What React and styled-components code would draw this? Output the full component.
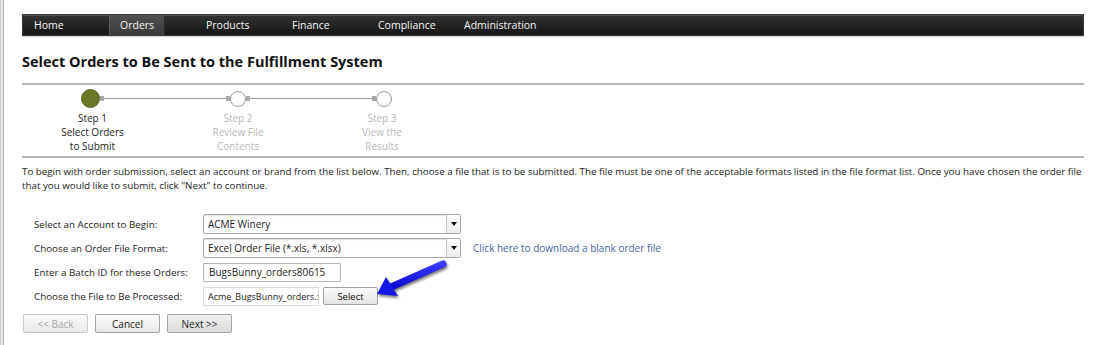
import React from 'react';
import styled, { createGlobalStyle } from 'styled-components';

const GlobalStyle = createGlobalStyle`
  html, body {
    margin: 0;
    padding: 0;
    background: #ffffff;
  }
  body {
    font-family: 'Open Sans', 'Noto Sans', sans-serif;
    color: #222;
  }
`;

const App = () => {
  const navItems = ['Home', 'Orders', 'Products', 'Finance', 'Compliance', 'Administration'];

  const steps = [
    { num: 1, lines: ['Select Orders', 'to Submit'], active: true },
    { num: 2, lines: ['Review File', 'Contents'] },
    { num: 3, lines: ['View the', 'Results'] }
  ];

  return (
    <>
      <GlobalStyle />
      <Page>
        <WindowEdge />
        <Main>
          <NavBar>
            {navItems.map((item) => (
              <NavCell key={item}>
                <NavLabel $active={item === 'Orders'}>{item}</NavLabel>
              </NavCell>
            ))}
          </NavBar>

          <Title>Select Orders to Be Sent to the Fulfillment System</Title>

          <StepsRow>
            {steps.map((step, i) => (
              <Step key={step.num}>
                <Track>
                  <Segment $show={i > 0} />
                  {i > 0 && <Tab />}
                  <Dot $active={step.active} />
                  {i < steps.length - 1 && <Tab />}
                  <Segment $show={i < steps.length - 1} />
                </Track>
                <StepText $active={step.active}>
                  <div>Step {step.num}</div>
                  {step.lines.map((l) => (
                    <div key={l}>{l}</div>
                  ))}
                </StepText>
              </Step>
            ))}
          </StepsRow>

          <Intro>
            To begin with order submission, select an account or brand from the list below. Then, choose a file that is to be submitted. The file must be one of the acceptable formats listed in the file format list. Once you have chosen the order file that you would like to submit, click "Next" to continue.
          </Intro>

          <Form>
            <FormRow>
              <Label>Select an Account to Begin:</Label>
              <Dropdown>
                <DropValue>ACME Winery</DropValue>
                <DropButton><Caret /></DropButton>
              </Dropdown>
            </FormRow>
            <FormRow>
              <Label>Choose an Order File Format:</Label>
              <Dropdown>
                <DropValue>Excel Order File (*.xls, *.xlsx)</DropValue>
                <DropButton><Caret /></DropButton>
              </Dropdown>
              <DownloadLink href="#">Click here to download a blank order file</DownloadLink>
            </FormRow>
            <FormRow>
              <Label>Enter a Batch ID for these Orders:</Label>
              <TextBox>BugsBunny_orders80615</TextBox>
            </FormRow>
            <FormRow>
              <Label>Choose the File to Be Processed:</Label>
              <FileBox>Acme_BugsBunny_orders.xlsx</FileBox>
              <SelectButton>Select</SelectButton>
            </FormRow>

            <Pointer width="84" height="46" viewBox="0 0 84 46">
              <defs>
                <linearGradient id="arrowBlue" x1="0" y1="0" x2="0" y2="1">
                  <stop offset="0" stopColor="#3b3bff" />
                  <stop offset="1" stopColor="#0a0ad0" />
                </linearGradient>
              </defs>
              <line x1="71" y1="9" x2="19" y2="32" stroke="url(#arrowBlue)" strokeWidth="7" strokeLinecap="round" />
              <polygon points="5,39 14,22 26,41" fill="#1616e6" />
            </Pointer>
          </Form>

          <ButtonRow>
            <WizardButton disabled>&lt;&lt; Back</WizardButton>
            <WizardButton>Cancel</WizardButton>
            <WizardButton $hover>Next &gt;&gt;</WizardButton>
          </ButtonRow>
        </Main>
      </Page>
    </>
  );
};

// Styled Components
const Page = styled.div`
  display: flex;
  width: 1100px;
  height: 345px;
  overflow: hidden;
`;

const WindowEdge = styled.div`
  width: 3px;
  flex-shrink: 0;
  background: #e9eaec;
  border-right: 1px solid #a9acb2;
  box-shadow: inset 1px 0 0 #c9ccd1;
`;

const Main = styled.div`
  width: 1062px;
  margin-left: 18px;
  display: flex;
  flex-direction: column;
`;

const NavBar = styled.div`
  margin-top: 14px;
  height: 20px;
  display: grid;
  grid-template-columns: repeat(6, 86px);
  padding-left: 0;
  background: linear-gradient(#333333, #151515);
  border: 1px solid #3c3c3c;
  box-shadow: inset 0 1px 0 #4a4a4a, 0 1px 1px #d8d8d8;
`;

const NavCell = styled.div`
  display: flex;
  align-items: stretch;
`;

const NavLabel = styled.span`
  display: flex;
  align-items: center;
  padding: 0 10px;
  font-size: 10.5px;
  color: #f4f4f4;
  background: ${(p) => (p.$active ? 'linear-gradient(#505050, #3a3a3a)' : 'transparent')};
  border-left: 1px solid ${(p) => (p.$active ? '#5e5e5e' : 'transparent')};
  border-right: 1px solid ${(p) => (p.$active ? '#2a2a2a' : 'transparent')};
`;

const Title = styled.h1`
  margin: 16px 0 0;
  height: 31px;
  font-size: 14.5px;
  font-weight: 700;
  color: #111;
  line-height: 20px;
`;

const StepsRow = styled.div`
  border-top: 2px solid #b4b4b4;
  border-bottom: 2px solid #b4b4b4;
  padding: 4px 0 3px;
  display: grid;
  grid-template-columns: repeat(3, 144px);
  & > :first-child {
    margin-left: -3px;
  }
`;

const Step = styled.div`
  display: flex;
  flex-direction: column;
  align-items: stretch;
`;

const Track = styled.div`
  height: 19px;
  display: flex;
  align-items: center;
`;

const Segment = styled.div`
  flex: 1;
  height: 1px;
  background: ${(p) => (p.$show ? '#9a9a9a' : 'transparent')};
`;

const Tab = styled.div`
  width: 4px;
  height: 5px;
  background: #a8a8a8;
`;

const Dot = styled.div`
  box-sizing: border-box;
  width: ${(p) => (p.$active ? '19px' : '16px')};
  height: ${(p) => (p.$active ? '19px' : '16px')};
  border-radius: 50%;
  background: ${(p) => (p.$active ? '#687828' : '#ffffff')};
  border: 1px solid ${(p) => (p.$active ? '#56631f' : '#9c9c9c')};
`;

const StepText = styled.div`
  margin-top: 3px;
  text-align: center;
  font-size: 10px;
  line-height: 14px;
  color: ${(p) => (p.$active ? '#1e1e1e' : '#b9b9b9')};
`;

const Intro = styled.p`
  margin: 7px 0 0;
  width: 1062px;
  font-size: 9.78px;
  line-height: 14px;
  color: #222;
`;

const Form = styled.div`
  position: relative;
  margin-top: 21px;
  padding-left: 12px;
  display: flex;
  flex-direction: column;
  gap: 4px;
`;

const FormRow = styled.div`
  display: flex;
  align-items: center;
  height: 20px;
`;

const Label = styled.span`
  width: 169px;
  flex-shrink: 0;
  font-size: 9.8px;
  color: #222;
`;

const Dropdown = styled.div`
  box-sizing: border-box;
  width: 258px;
  height: 20px;
  display: flex;
  border: 1px solid #a9a9a9;
  border-radius: 2px;
  background: #fff;
  box-shadow: inset 0 1px 1px #e2e2e2;
`;

const DropValue = styled.span`
  flex: 1;
  display: flex;
  align-items: center;
  padding-left: 4px;
  font-size: 10px;
  color: #222;
`;

const DropButton = styled.span`
  width: 13px;
  display: flex;
  align-items: center;
  justify-content: center;
  border-left: 1px solid #c8c8c8;
  background: linear-gradient(#fdfdfd, #ececec);
`;

const Caret = styled.span`
  width: 0;
  height: 0;
  border-left: 3px solid transparent;
  border-right: 3px solid transparent;
  border-top: 4px solid #111;
`;

const DownloadLink = styled.a`
  margin-left: 12px;
  font-size: 10px;
  color: #46639a;
  text-decoration: none;
`;

const TextBox = styled.div`
  box-sizing: border-box;
  width: 138px;
  height: 19px;
  display: flex;
  align-items: center;
  padding-left: 5px;
  border: 1px solid #b5b5b5;
  border-radius: 1px;
  font-size: 10px;
  color: #222;
`;

const FileBox = styled.div`
  box-sizing: border-box;
  width: 116px;
  height: 19px;
  display: flex;
  align-items: center;
  padding-left: 4px;
  border: 1px solid #dadada;
  font-size: 9px;
  color: #222;
  overflow: hidden;
  white-space: nowrap;
`;

const SelectButton = styled.button`
  box-sizing: border-box;
  margin-left: 4px;
  width: 55px;
  height: 18px;
  padding: 0;
  font-family: inherit;
  font-size: 9.5px;
  color: #111;
  border: 1px solid #a2a2a2;
  border-radius: 2px;
  background: linear-gradient(#fbfbfb, #e4e4e4);
`;

const Pointer = styled.svg`
  position: absolute;
  left: 350px;
  top: 41px;
  filter: drop-shadow(1px 2px 1.5px rgba(0, 0, 0, 0.55));
`;

const ButtonRow = styled.div`
  margin-top: 8px;
  padding-left: 1px;
  display: flex;
  gap: 7px;
`;

const WizardButton = styled.button`
  box-sizing: border-box;
  width: 65px;
  height: 19px;
  padding: 0;
  font-family: inherit;
  font-size: 10px;
  color: ${(p) => (p.disabled ? '#a8a8a8' : '#222')};
  border: 1px solid ${(p) => (p.disabled ? '#c9c9c9' : '#a4a4a4')};
  border-radius: 2px;
  background: ${(p) =>
    p.$hover ? 'linear-gradient(#f0f0f0, #dcdcdc)' : 'linear-gradient(#fbfbfb, #e8e8e8)'};
`;

export default App;
